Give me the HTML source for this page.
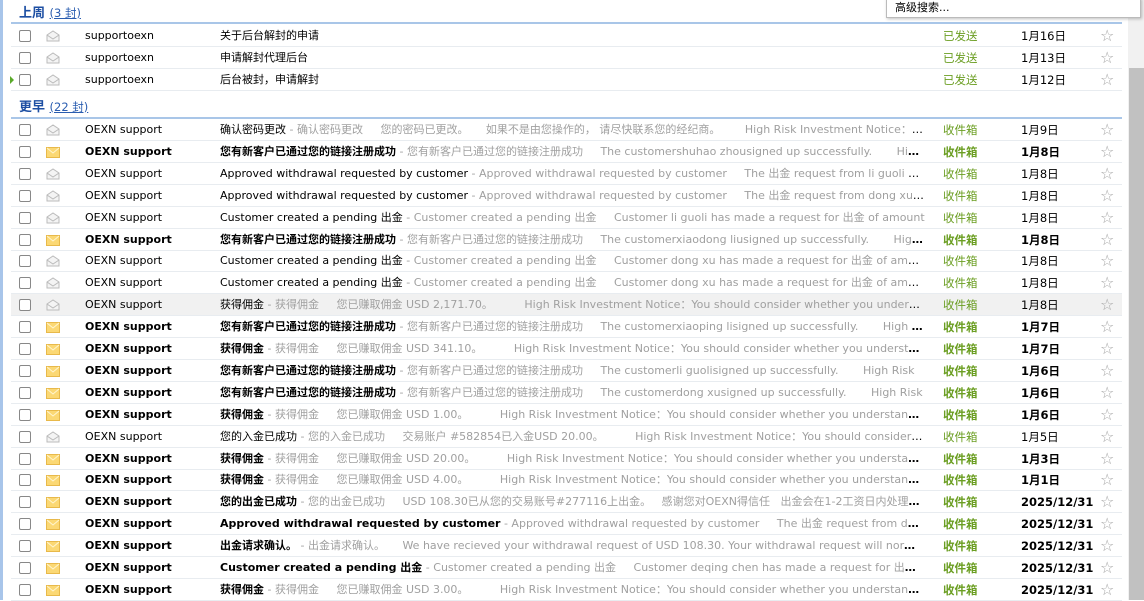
<!DOCTYPE html>
<html><head><meta charset="utf-8"><style>
*{margin:0;padding:0;box-sizing:border-box}
body{width:1144px;height:600px;overflow:hidden;background:#fff;font-family:"DejaVu Sans","Noto Sans CJK SC",sans-serif;font-size:11px;color:#000;position:relative}
.lb{position:absolute;left:0;top:0;width:3px;height:600px;background:#a8c5ea}
.sb{position:absolute;left:1128px;top:0;width:16px;height:600px;background:#f1f1f1}
.th{position:absolute;left:1129px;top:68px;width:15px;height:532px;background:#c1c1c1}
.gh{position:absolute;left:19px;font-size:13px;font-weight:bold;color:#1d4fa3}
.gh span{font-weight:normal;font-size:11.5px;text-decoration:underline;color:#2a5db0}
.gl{position:absolute;left:11px;width:1111px;height:2px;background:#a9c6e8}
.r{position:absolute;left:11px;width:1111px;height:22px;border-bottom:1px solid #e8ecf0;line-height:22px;white-space:nowrap}
.r.h{background:#f1f1f1}
.cb{position:absolute;left:8px;top:5px;width:12px;height:12px;border:1px solid #888;border-radius:2px;background:#fff}
.ic{position:absolute;left:35px;top:5px}
.s{position:absolute;left:74px}
.sub{position:absolute;left:209px;width:705px;overflow:hidden;text-overflow:ellipsis}
.p{color:#a0a0a0}
.f{position:absolute;left:932px;color:#6b9e22;font-size:11.5px}
.d{position:absolute;left:1010px;font-size:11.5px}
.st{position:absolute;left:1089px;top:0;color:#a8a8a8;font-size:16px}
.b{font-weight:bold}
.b .p{font-weight:normal}
.arr{position:absolute;left:-1px;top:7px;width:0;height:0;border-left:4px solid #5aaa2a;border-top:4px solid transparent;border-bottom:4px solid transparent}
.dd{position:absolute;left:886px;top:-2px;width:255px;height:20px;background:#fff;border:1px solid #bbb;box-shadow:1px 1px 3px rgba(0,0,0,.25);padding-left:8px;line-height:18px;font-size:11px}
</style></head><body>
<div class="lb"></div>
<div class="gh" style="top:2px">上周 <span>(3 封)</span></div>
<div class="gl" style="top:22px"></div>
<div class="gh" style="top:96px">更早 <span>(22 封)</span></div>
<div class="gl" style="top:117px"></div>
<div id="rows"></div>
<div class="sb"></div><div class="th"></div>
<div class="dd">高级搜索...</div>
<script>
var op='<svg class="ic" width="14" height="12" viewBox="0 0 14 12"><path d="M1 5 L7 1 L13 5 V11 H1 Z" fill="#f4f4f4" stroke="#bbb"/><path d="M1 5 L7 9 L13 5" fill="none" stroke="#bbb"/></svg>';
var cl='<svg class="ic" width="14" height="12" viewBox="0 0 14 12"><rect x="0.5" y="1.5" width="13" height="10" fill="#fbd874" stroke="#e8b94a"/><path d="M1 2 L7 7 L13 2" fill="none" stroke="#fff5d0"/></svg>';
var R=[
[25,0,'supportoexn','关于后台解封的申请','','已发送','1月16日'],
[47,0,'supportoexn','申请解封代理后台','','已发送','1月13日'],
[69,0,'supportoexn','后台被封，申请解封','','已发送','1月12日',1],
];
var E=[
[0,'OEXN support','确认密码更改','确认密码更改 &nbsp; &nbsp; 您的密码已更改。 &nbsp; &nbsp; 如果不是由您操作的， 请尽快联系您的经纪商。 &nbsp; &nbsp; &nbsp; High Risk Investment Notice：You should','1月9日'],
[1,'OEXN support','您有新客户已通过您的链接注册成功','您有新客户已通过您的链接注册成功 &nbsp; &nbsp; The customershuhao zhousigned up successfully. &nbsp; &nbsp; &nbsp; High Risk','1月8日'],
[0,'OEXN support','Approved withdrawal requested by customer','Approved withdrawal requested by customer &nbsp; &nbsp; The 出金 request from li guoli has been','1月8日'],
[0,'OEXN support','Approved withdrawal requested by customer','Approved withdrawal requested by customer &nbsp; &nbsp; The 出金 request from dong xu has been','1月8日'],
[0,'OEXN support','Customer created a pending 出金','Customer created a pending 出金 &nbsp; &nbsp; Customer li guoli has made a request for 出金 of amount','1月8日'],
[1,'OEXN support','您有新客户已通过您的链接注册成功','您有新客户已通过您的链接注册成功 &nbsp; &nbsp; The customerxiaodong liusigned up successfully. &nbsp; &nbsp; &nbsp; High Risk','1月8日'],
[0,'OEXN support','Customer created a pending 出金','Customer created a pending 出金 &nbsp; &nbsp; Customer dong xu has made a request for 出金 of amount','1月8日'],
[0,'OEXN support','Customer created a pending 出金','Customer created a pending 出金 &nbsp; &nbsp; Customer dong xu has made a request for 出金 of amount','1月8日'],
[0,'OEXN support','获得佣金','获得佣金 &nbsp; &nbsp; 您已赚取佣金 USD 2,171.70。 &nbsp; &nbsp; &nbsp; &nbsp; High Risk Investment Notice：You should consider whether you understand','1月8日',0,1],
[1,'OEXN support','您有新客户已通过您的链接注册成功','您有新客户已通过您的链接注册成功 &nbsp; &nbsp; The customerxiaoping lisigned up successfully. &nbsp; &nbsp; &nbsp; High Risk','1月7日'],
[1,'OEXN support','获得佣金','获得佣金 &nbsp; &nbsp; 您已赚取佣金 USD 341.10。 &nbsp; &nbsp; &nbsp; &nbsp; High Risk Investment Notice：You should consider whether you understand','1月7日'],
[1,'OEXN support','您有新客户已通过您的链接注册成功','您有新客户已通过您的链接注册成功 &nbsp; &nbsp; The customerli guolisigned up successfully. &nbsp; &nbsp; &nbsp; High Risk','1月6日'],
[1,'OEXN support','您有新客户已通过您的链接注册成功','您有新客户已通过您的链接注册成功 &nbsp; &nbsp; The customerdong xusigned up successfully. &nbsp; &nbsp; &nbsp; High Risk','1月6日'],
[1,'OEXN support','获得佣金','获得佣金 &nbsp; &nbsp; 您已赚取佣金 USD 1.00。 &nbsp; &nbsp; &nbsp; &nbsp; High Risk Investment Notice：You should consider whether you understand how','1月6日'],
[0,'OEXN support','您的入金已成功','您的入金已成功 &nbsp; &nbsp; 交易账户 #582854已入金USD 20.00。 &nbsp; &nbsp; &nbsp; &nbsp; High Risk Investment Notice：You should consider whether','1月5日'],
[1,'OEXN support','获得佣金','获得佣金 &nbsp; &nbsp; 您已赚取佣金 USD 20.00。 &nbsp; &nbsp; &nbsp; &nbsp; High Risk Investment Notice：You should consider whether you understand how','1月3日'],
[1,'OEXN support','获得佣金','获得佣金 &nbsp; &nbsp; 您已赚取佣金 USD 4.00。 &nbsp; &nbsp; &nbsp; &nbsp; High Risk Investment Notice：You should consider whether you understand how','1月1日'],
[1,'OEXN support','您的出金已成功','您的出金已成功 &nbsp; &nbsp; USD 108.30已从您的交易账号#277116上出金。 &nbsp; 感谢您对OEXN得信任 &nbsp; 出金会在1-2工资日内处理到账','2025/12/31'],
[1,'OEXN support','Approved withdrawal requested by customer','Approved withdrawal requested by customer &nbsp; &nbsp; The 出金 request from deqing chen','2025/12/31'],
[1,'OEXN support','出金请求确认。','出金请求确认。 &nbsp; &nbsp; We have recieved your withdrawal request of USD 108.30. Your withdrawal request will normally','2025/12/31'],
[1,'OEXN support','Customer created a pending 出金','Customer created a pending 出金 &nbsp; &nbsp; Customer deqing chen has made a request for 出金 of amount','2025/12/31'],
[1,'OEXN support','获得佣金','获得佣金 &nbsp; &nbsp; 您已赚取佣金 USD 3.00。 &nbsp; &nbsp; &nbsp; &nbsp; High Risk Investment Notice：You should consider whether you understand how','2025/12/31']
];
var h='';
function row(top,u,s,sub,pv,f,d,arr,hl){
 h+='<div class="r'+(u?' b':'')+(hl?' h':'')+'" style="top:'+top+'px">'+(arr?'<div class="arr"></div>':'')+'<div class="cb"></div>'+(u?cl:op)+'<div class="s">'+s+'</div><div class="sub">'+sub+(pv?'<span class="p"> - '+pv+'</span>':'')+'</div><div class="f">'+f+'</div><div class="d">'+d+'</div><div class="st">☆</div></div>';
}
R.forEach(function(r){row(r[0],r[1],r[2],r[3],r[4],r[5],r[6],r[7])});
E.forEach(function(e,i){row(Math.round(119+i*21.9),e[0],e[1],e[2],e[3],'收件箱',e[4],0,e[6])});
document.getElementById('rows').innerHTML=h;
</script>
</body></html>
